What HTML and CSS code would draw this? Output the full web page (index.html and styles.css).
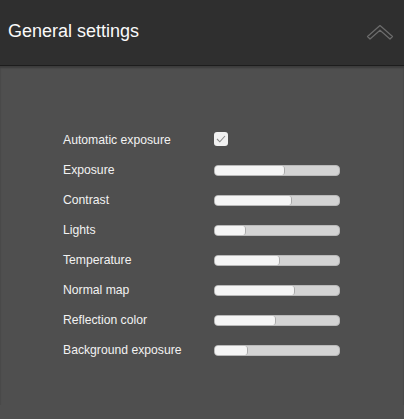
FILE: index.html
```html
<!DOCTYPE html>
<html lang="en">
<head>
  <meta charset="UTF-8">
  <meta name="viewport" content="width=device-width, initial-scale=1.0">
  <title>General settings</title>
  <link rel="stylesheet" href="styles.css">
</head>
<body>
  <div class="panel">
    <div class="panel-header">
      <h1>General settings</h1>
      <svg class="collapse" width="28" height="16" viewBox="0 0 28 16">
        <path d="M14 1.5 L26.5 12.5 L24 15 L14 6.2 L4 15 L1.5 12.5 Z" fill="none" stroke="#6c6c6c" stroke-width="1.2" stroke-linejoin="round"/>
      </svg>
    </div>

    <div class="panel-body">
      <div class="settings">
        <label class="setting-label">Automatic exposure</label>
        <div class="control">
          <span class="checkbox">
            <svg width="10" height="8" viewBox="0 0 10 8">
              <path d="M1 4 L3.8 6.8 L9 1" fill="none" stroke="#8a8a8a" stroke-width="1.1"/>
            </svg>
          </span>
        </div>

        <label class="setting-label">Exposure</label>
        <div class="control"><div class="slider"><div class="slider-fill" style="width: 70px"></div></div></div>

        <label class="setting-label">Contrast</label>
        <div class="control"><div class="slider"><div class="slider-fill" style="width: 77px"></div></div></div>

        <label class="setting-label">Lights</label>
        <div class="control"><div class="slider"><div class="slider-fill" style="width: 31px"></div></div></div>

        <label class="setting-label">Temperature</label>
        <div class="control"><div class="slider"><div class="slider-fill" style="width: 65px"></div></div></div>

        <label class="setting-label">Normal map</label>
        <div class="control"><div class="slider"><div class="slider-fill" style="width: 80px"></div></div></div>

        <label class="setting-label">Reflection color</label>
        <div class="control"><div class="slider"><div class="slider-fill" style="width: 61px"></div></div></div>

        <label class="setting-label">Background exposure</label>
        <div class="control"><div class="slider"><div class="slider-fill" style="width: 33px"></div></div></div>
      </div>
    </div>
  </div>
</body>
</html>
```

FILE: styles.css
```css
/* General Styles */
body {
  font-family: 'Liberation Sans', Arial, sans-serif;
  background-color: #4f4f4f;
  color: #f2f2f2;
  margin: 0;
  padding: 0;
  min-height: 100vh;
}

/* Panel */
.panel {
  display: flex;
  flex-direction: column;
}

.panel-header {
  background-color: #2f2f2f;
  height: 65px;
  border-bottom: 1px solid #1d1d1d;
  display: flex;
  align-items: center;
  justify-content: space-between;
  padding: 0 10px 0 8px;
}

.panel-header h1 {
  margin: 0;
  font-size: 18px;
  font-weight: normal;
  color: #fafafa;
  padding-bottom: 2px;
}

.collapse {
  margin-bottom: 2px;
}

.panel-body {
  box-shadow: inset 0 2px 2px rgba(0, 0, 0, 0.25);
  padding: 59px 0 40px 63px;
}

/* Settings grid */
.settings {
  display: grid;
  grid-template-columns: 151px 126px;
  grid-auto-rows: 30px;
  align-items: center;
}

.setting-label {
  font-size: 12.2px;
  color: #f2f2f2;
}

.control {
  display: flex;
  align-items: center;
  height: 30px;
}

/* Checkbox */
.checkbox {
  width: 14px;
  height: 14px;
  border-radius: 3px;
  background-color: #f1f1f1;
  display: flex;
  align-items: center;
  justify-content: center;
  margin-top: -3px;
}

/* Sliders */
.slider {
  position: relative;
  width: 126px;
  height: 11px;
  box-sizing: border-box;
  background-color: #d3d3d3;
  border: 1px solid #b9b9b9;
  border-radius: 4px;
}

.slider-fill {
  height: 100%;
  box-sizing: border-box;
  background-color: #f5f5f5;
  border-right: 1px solid #a9a9a9;
  border-radius: 3px;
}
```
